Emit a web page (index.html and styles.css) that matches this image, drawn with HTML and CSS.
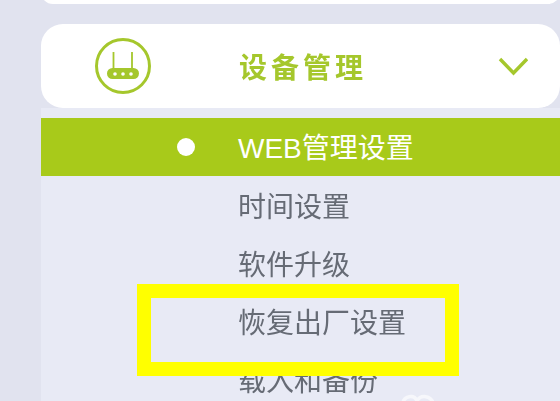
FILE: index.html
```html
<!DOCTYPE html>
<html lang="zh-CN">
<head>
    <meta charset="UTF-8">
    <meta name="viewport" content="width=device-width, initial-scale=1.0">
    <title>设备管理</title>
    <link rel="stylesheet" href="styles.css">
</head>
<body>
    <div class="sidebar">
        <div class="card-prev"></div>
        <div class="card-head">
            <svg class="icon-router" width="56" height="56" viewBox="0 0 56 56">
                <circle cx="28" cy="28" r="26.500" fill="none" stroke="#a5c72c" stroke-width="3"/>
                <path d="M18.500 14V31M37 14V31" fill="none" stroke="#a5c72c" stroke-width="1.800"/>
                <rect x="12" y="30" width="32" height="11" rx="5.500" fill="#a5c72c"/>
                <circle cx="20" cy="36" r="1.800" fill="#fff"/>
                <circle cx="28" cy="36" r="1.800" fill="#fff"/>
                <circle cx="36" cy="36" r="1.800" fill="#fff"/>
            </svg>
            <span class="head-title">设备管理</span>
            <svg class="icon-arrow" width="30" height="20" viewBox="0 0 30 20">
                <path d="M2 3L15.500 17L29 3" fill="none" stroke="#a5c72c" stroke-width="3.400"/>
            </svg>
        </div>
        <ul class="submenu">
            <li class="active"><span class="dot"></span>WEB管理设置</li>
            <li>时间设置</li>
            <li>软件升级</li>
            <li>恢复出厂设置</li>
            <li>载入和备份</li>
        </ul>
    </div>
    <div class="highlight"></div>
    <svg class="watermark" width="36" height="10" viewBox="0 0 36 10">
        <path d="M3 10C4 3 14 1 17 8C21 1 31 3 33 10" fill="none" stroke="#f6f7fb" stroke-width="3.500"/>
    </svg>
</body>
</html>
```

FILE: styles.css
```css
html, body {
    height: 100%;
}
body {
    margin: 0;
    overflow: hidden;
    background-color: #e1e3ef;
    font-family: "Liberation Sans", "Noto Sans CJK SC", sans-serif;
}
.sidebar {
    margin-left: 41px;
    filter: blur(0.6px);
}
.card-prev {
    height: 24px;
    margin-top: -20px;
    margin-bottom: 20px;
    background-color: #fff;
    border-radius: 22px;
}
.card-head {
    display: flex;
    align-items: center;
    height: 84px;
    background-color: #fff;
    border-radius: 22px;
}
.icon-router {
    margin-left: 54px;
    flex-shrink: 0;
}
.head-title {
    margin-left: 88px;
    width: 259px;
    font-size: 28px;
    font-weight: 700;
    letter-spacing: 4px;
    color: #a5c72c;
}
.icon-arrow {
    flex-shrink: 0;
}
.submenu {
    list-style: none;
    margin: 0;
    padding: 10px 0 0;
    background-color: #e8eaf5;
}
.submenu li {
    display: flex;
    align-items: center;
    box-sizing: border-box;
    height: 58px;
    padding-left: 197px;
    font-size: 28px;
    color: #666b75;
}
.submenu li.active {
    position: relative;
    padding-bottom: 2px;
    background-color: #a8ca1a;
    color: #fff;
}
.dot {
    position: absolute;
    left: 136px;
    top: 20px;
    width: 18px;
    height: 18px;
    border-radius: 50%;
    background-color: #fff;
}
.highlight {
    position: absolute;
    left: 137px;
    top: 284px;
    width: 294px;
    height: 64px;
    border: 14px solid #ffff00;
}
.watermark {
    position: absolute;
    left: 400px;
    top: 393px;
}
```
